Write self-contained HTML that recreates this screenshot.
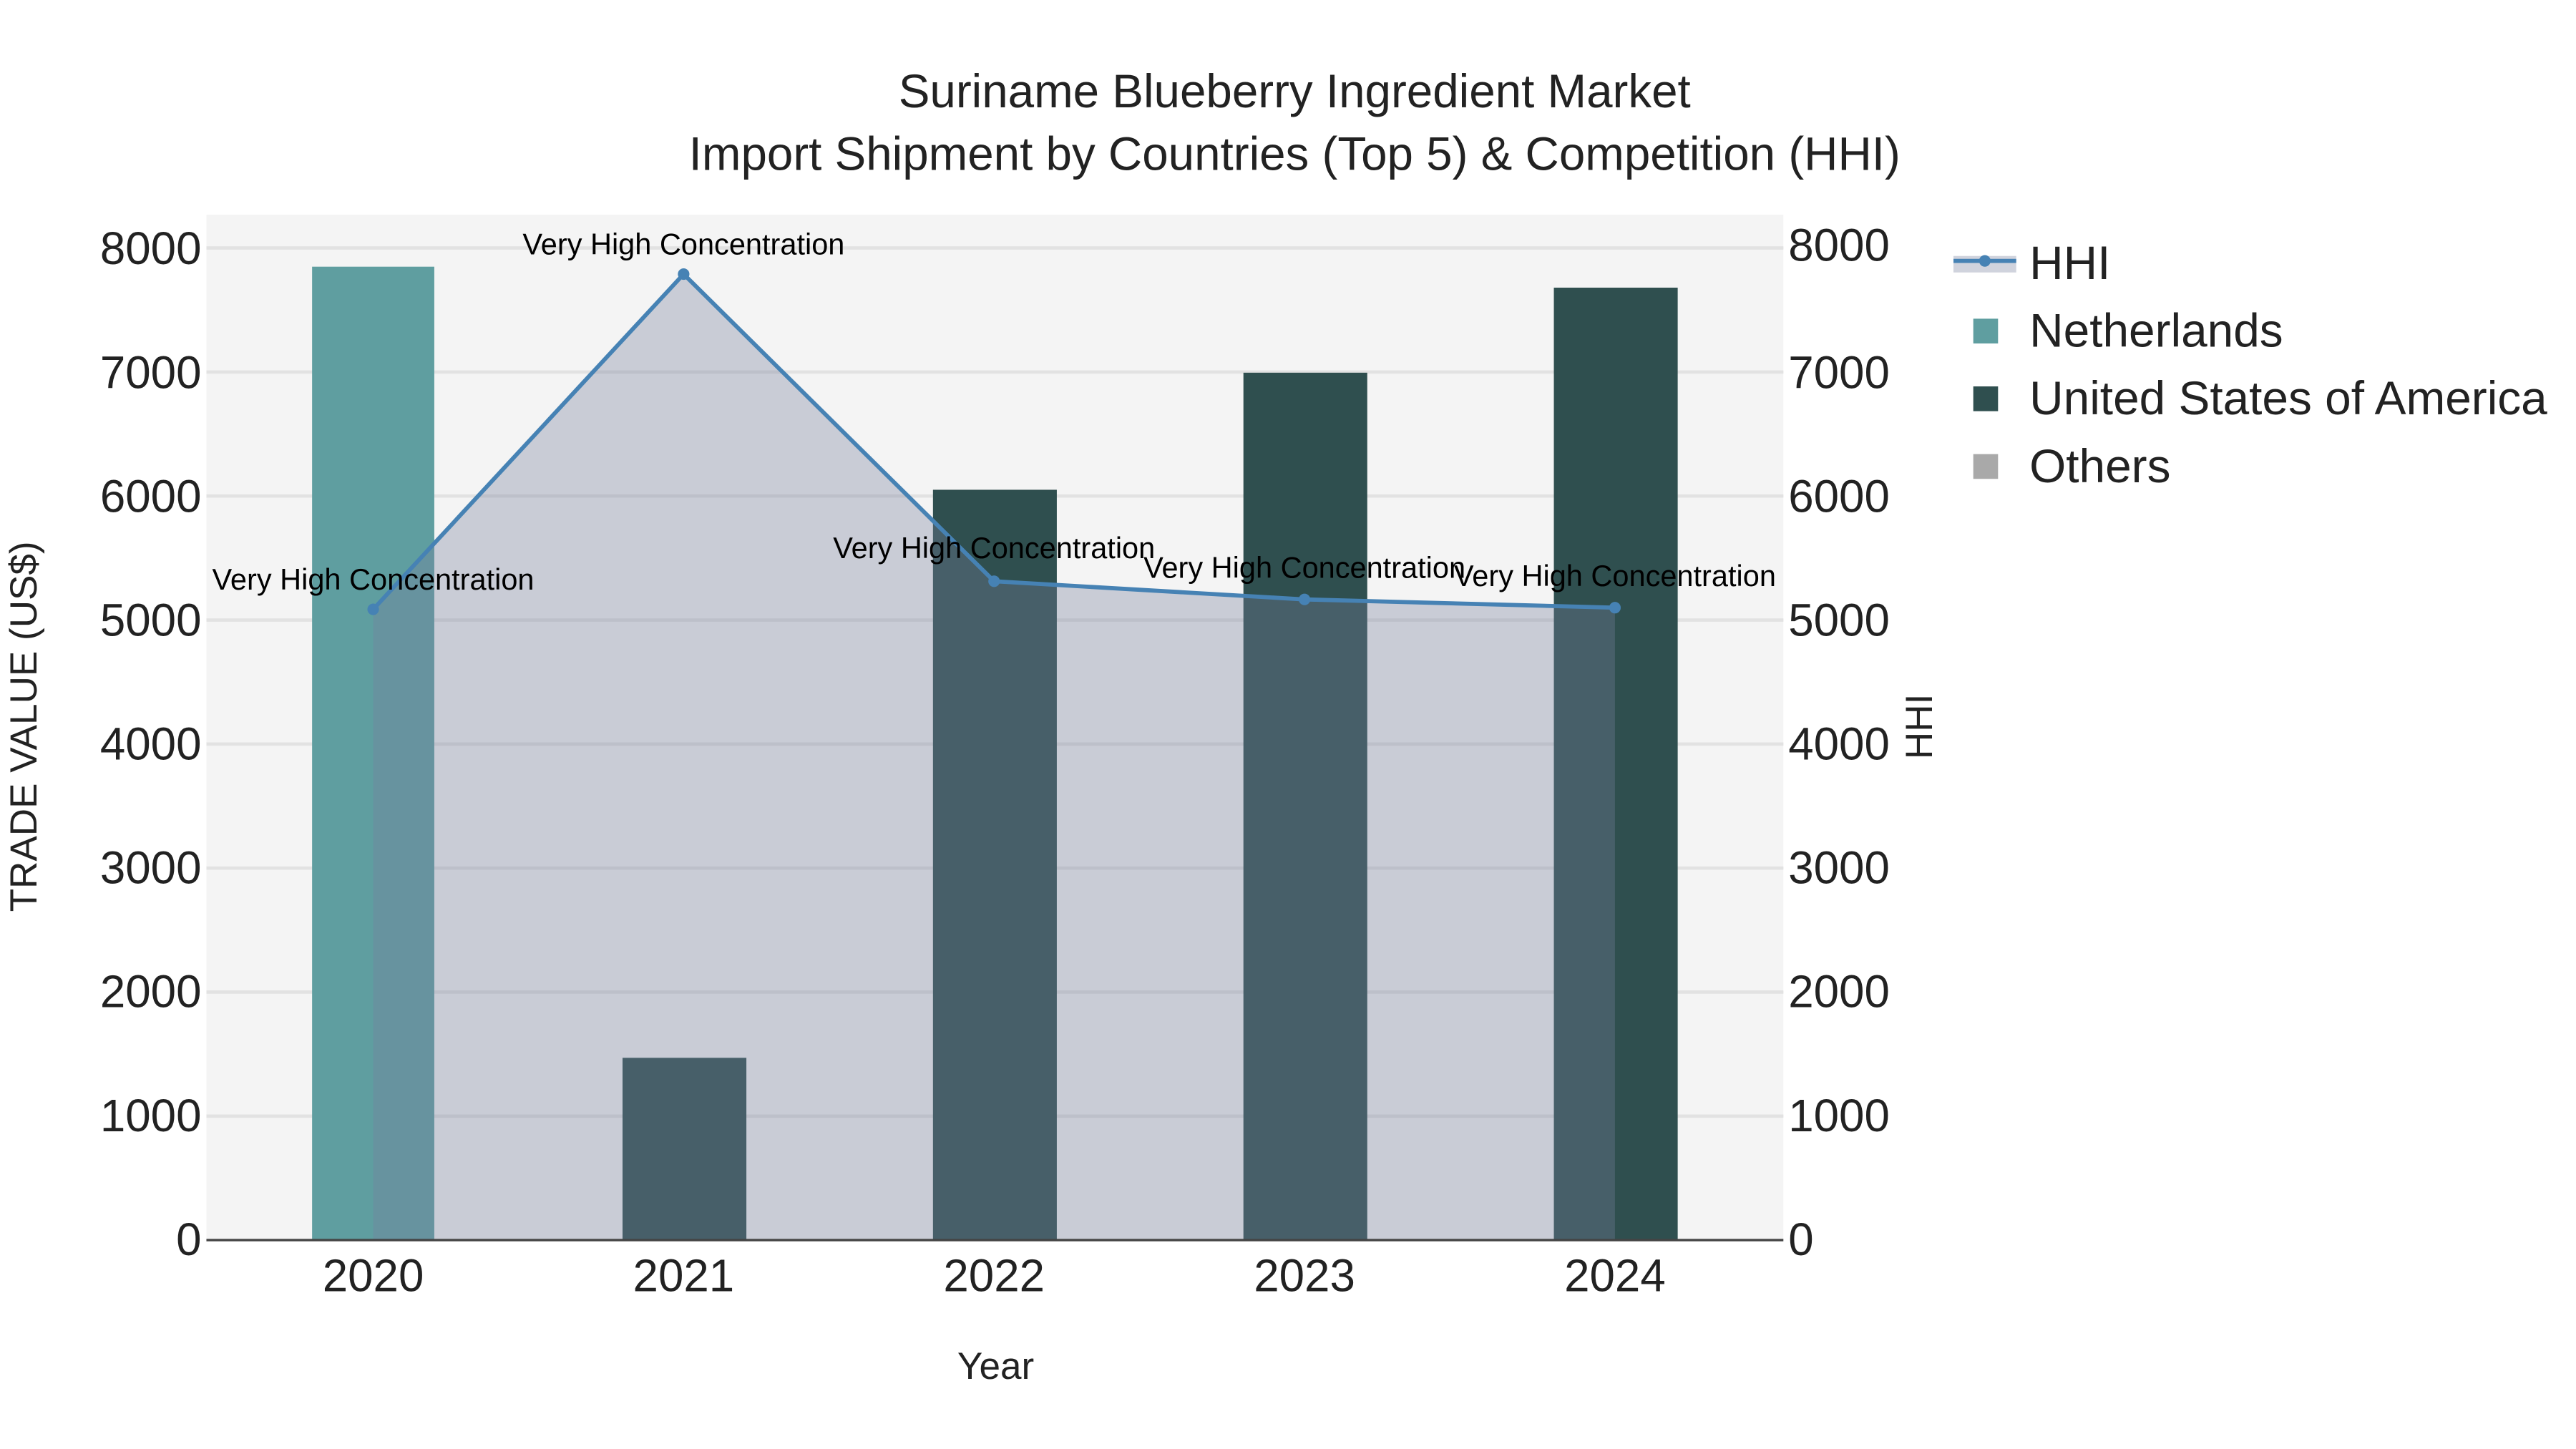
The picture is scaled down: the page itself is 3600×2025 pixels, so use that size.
<!DOCTYPE html>
<html><head><meta charset="utf-8"><style>html,body{margin:0;padding:0;background:#fff}svg{display:block}</style></head>
<body>
<svg width="3600" height="2025" viewBox="0 0 1560 877.5" xmlns="http://www.w3.org/2000/svg" font-family="Liberation Sans, sans-serif">
<rect width="1560" height="877.5" fill="#fff"/>
<rect x="125" y="130" width="955" height="621" fill="#f4f4f4"/>
<g stroke="#e2e2e2" stroke-width="2">
<line x1="125" x2="1080" y1="675.9" y2="675.9"/><line x1="125" x2="1080" y1="600.8" y2="600.8"/>
<line x1="125" x2="1080" y1="525.7" y2="525.7"/><line x1="125" x2="1080" y1="450.6" y2="450.6"/>
<line x1="125" x2="1080" y1="375.5" y2="375.5"/><line x1="125" x2="1080" y1="300.4" y2="300.4"/>
<line x1="125" x2="1080" y1="225.3" y2="225.3"/><line x1="125" x2="1080" y1="150.2" y2="150.2"/>
</g>
<rect x="189" y="161.5" width="74" height="589.5" fill="#5f9ea0"/>
<rect x="377" y="640.6" width="75" height="110.4" fill="#2f4f4f"/>
<rect x="565" y="296.6" width="75" height="454.4" fill="#2f4f4f"/>
<rect x="753" y="225.7" width="75" height="525.3" fill="#2f4f4f"/>
<rect x="941" y="174.2" width="75" height="576.8" fill="#2f4f4f"/>
<path d="M226,369 L414,166 L602,352 L790,363 L978,368 L978,751 L226,751 Z" fill="rgba(119,128,157,0.345)"/>
<line x1="125" x2="1080" y1="751" y2="751" stroke="#444" stroke-width="1.5"/>
<polyline points="226,369 414,166 602,352 790,363 978,368" fill="none" stroke="#4682b4" stroke-width="2.5"/>
<g fill="#4682b4"><circle cx="226" cy="369" r="3.5"/><circle cx="414" cy="166" r="3.5"/><circle cx="602" cy="352" r="3.5"/><circle cx="790" cy="363" r="3.5"/><circle cx="978" cy="368" r="3.5"/></g>
<g font-size="18" text-anchor="middle" fill="#000">
<text x="226" y="357">Very High Concentration</text>
<text x="414" y="154">Very High Concentration</text>
<text x="602" y="338">Very High Concentration</text>
<text x="790" y="350">Very High Concentration</text>
<text x="978" y="355">Very High Concentration</text>
</g>
<g font-size="28.4" text-anchor="middle" fill="#222">
<text x="784" y="65">Suriname Blueberry Ingredient Market</text>
<text x="784" y="103">Import Shipment by Countries (Top 5) &amp; Competition (HHI)</text>
</g>
<g font-size="27.6" text-anchor="middle" fill="#222">
<text x="226" y="782">2020</text><text x="414" y="782">2021</text><text x="602" y="782">2022</text><text x="790" y="782">2023</text><text x="978" y="782">2024</text>
</g>
<g font-size="27.6" text-anchor="end" fill="#222">
<text x="122" y="760">0</text><text x="122" y="685">1000</text><text x="122" y="610">2000</text><text x="122" y="535">3000</text><text x="122" y="460">4000</text><text x="122" y="385">5000</text><text x="122" y="310">6000</text><text x="122" y="235">7000</text><text x="122" y="160">8000</text>
</g>
<g font-size="27.6" fill="#222">
<text x="1083" y="760">0</text><text x="1083" y="685">1000</text><text x="1083" y="610">2000</text><text x="1083" y="535">3000</text><text x="1083" y="460">4000</text><text x="1083" y="385">5000</text><text x="1083" y="310">6000</text><text x="1083" y="235">7000</text><text x="1083" y="158">8000</text>
</g>
<text x="603" y="835" font-size="23" text-anchor="middle" fill="#222">Year</text>
<text transform="translate(22,440) rotate(-90)" font-size="23" text-anchor="middle" fill="#222">TRADE VALUE (US$)</text>
<text transform="translate(1170,440) rotate(-90)" font-size="23" text-anchor="middle" fill="#222">HHI</text>
<rect x="1183" y="155" width="38" height="10" fill="rgba(119,128,157,0.345)"/>
<line x1="1183" x2="1221" y1="158" y2="158" stroke="#4682b4" stroke-width="2.5"/>
<circle cx="1202" cy="158" r="3.5" fill="#4682b4"/>
<rect x="1195" y="193" width="15" height="15" fill="#5f9ea0"/>
<rect x="1195" y="234" width="15" height="15" fill="#2f4f4f"/>
<rect x="1195" y="275" width="15" height="15" fill="#a9a9a9"/>
<g font-size="28.5" fill="#222">
<text x="1229" y="169">HHI</text><text x="1229" y="210">Netherlands</text><text x="1229" y="251">United States of America</text><text x="1229" y="292">Others</text>
</g>
</svg>
</body></html>
